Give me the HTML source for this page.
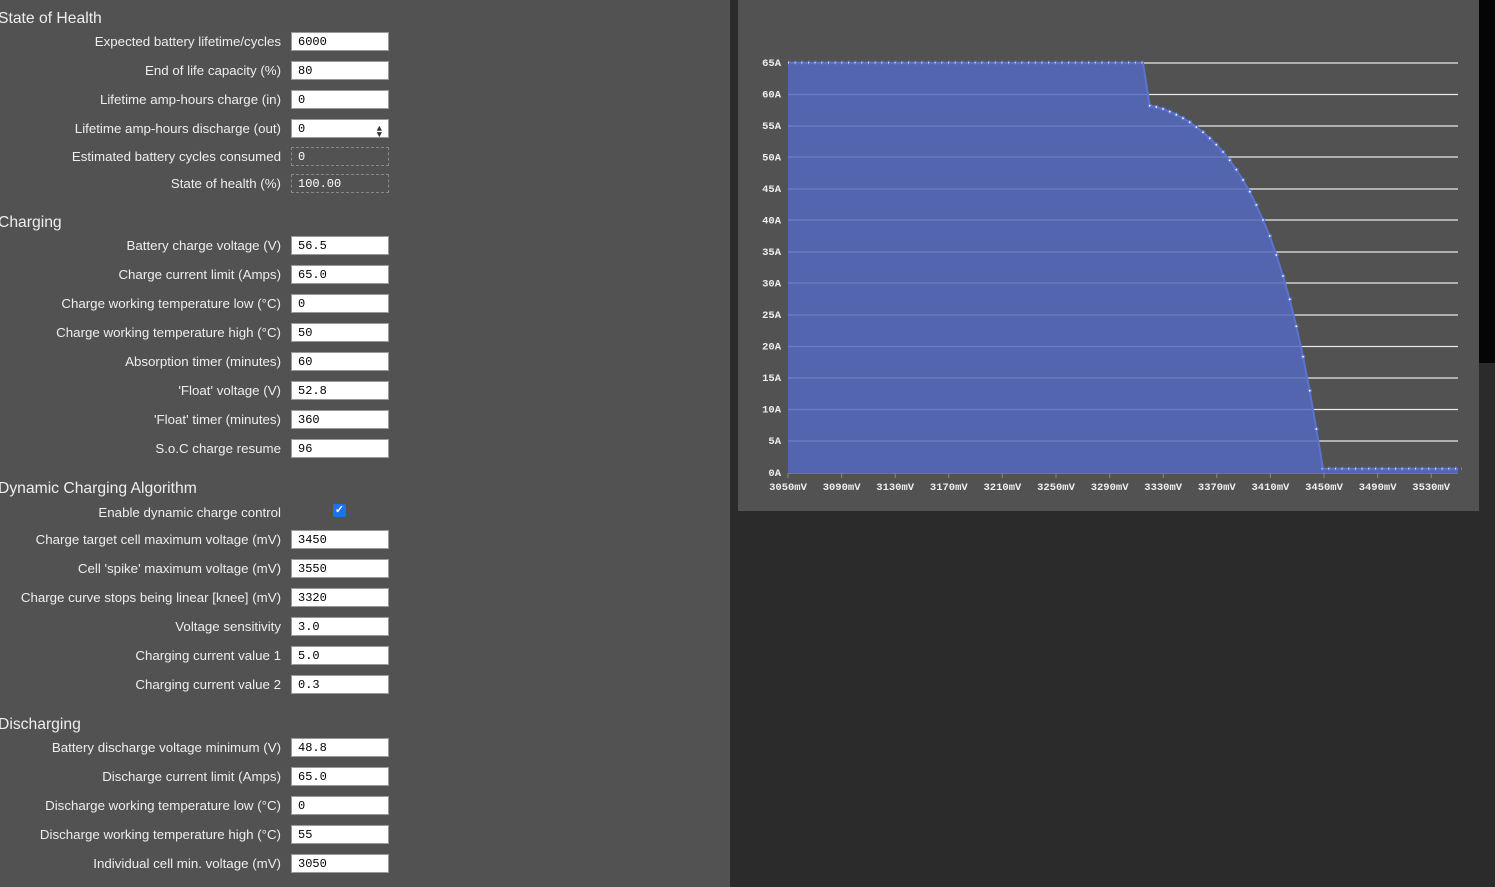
<!DOCTYPE html>
<html><head><meta charset="utf-8"><style>
*{margin:0;padding:0;box-sizing:border-box}
body{width:1495px;height:887px;overflow:hidden;background:#2b2b2b;position:relative;font-family:"Liberation Sans",Arial,sans-serif}
#left{position:absolute;left:0;top:0;width:730px;height:887px;background:#525252}
#blk{position:absolute;left:1479px;top:0;width:16px;height:363px;background:#050505}
#chart{position:absolute;left:738px;top:0;width:741px;height:511px;background:#525252}
.h{position:absolute;left:-2px;font-size:15.7px;color:#eee;white-space:nowrap}
.l{position:absolute;left:0;width:281px;text-align:right;font-size:13.3px;color:#eee;white-space:nowrap;line-height:19px}
.i{position:absolute;left:291px;width:98px;height:19px;background:#fff;border:1px solid #999;font-family:"Liberation Mono",monospace;font-size:12px;color:#000;padding-left:6px;line-height:18px}
.d{background:transparent;border:1px dashed #888;color:#fff}
.cb{position:absolute;left:333px;width:13px;height:13px;background:#1a73e8;border-radius:2px;color:#fff;font-size:11px;line-height:13px;text-align:center;font-weight:bold}
</style></head><body>
<div id="left">
<div class="h" style="top:10px">State of Health</div>
<div class="l" style="top:32px">Expected battery lifetime/cycles</div><div class="i" style="top:32px">6000</div>
<div class="l" style="top:61px">End of life capacity (%)</div><div class="i" style="top:61px">80</div>
<div class="l" style="top:90px">Lifetime amp-hours charge (in)</div><div class="i" style="top:90px">0</div>
<div class="l" style="top:119px">Lifetime amp-hours discharge (out)</div><div class="i" style="top:119px">0<span style="position:absolute;right:6px;top:0;font-size:9px;color:#333">&#9650;<br></span><span style="position:absolute;right:6px;top:6px;font-size:9px;color:#333">&#9660;</span></div>
<div class="l" style="top:147px">Estimated battery cycles consumed</div><div class="i d" style="top:147px">0</div>
<div class="l" style="top:174px">State of health (%)</div><div class="i d" style="top:174px">100.00</div>

<div class="h" style="top:214px">Charging</div>
<div class="l" style="top:236px">Battery charge voltage (V)</div><div class="i" style="top:236px">56.5</div>
<div class="l" style="top:265px">Charge current limit (Amps)</div><div class="i" style="top:265px">65.0</div>
<div class="l" style="top:294px">Charge working temperature low (°C)</div><div class="i" style="top:294px">0</div>
<div class="l" style="top:323px">Charge working temperature high (°C)</div><div class="i" style="top:323px">50</div>
<div class="l" style="top:352px">Absorption timer (minutes)</div><div class="i" style="top:352px">60</div>
<div class="l" style="top:381px">'Float' voltage (V)</div><div class="i" style="top:381px">52.8</div>
<div class="l" style="top:410px">'Float' timer (minutes)</div><div class="i" style="top:410px">360</div>
<div class="l" style="top:439px">S.o.C charge resume</div><div class="i" style="top:439px">96</div>

<div class="h" style="top:480px">Dynamic Charging Algorithm</div>
<div class="l" style="top:503px">Enable dynamic charge control</div><div class="cb" style="top:504px">✓</div>
<div class="l" style="top:530px">Charge target cell maximum voltage (mV)</div><div class="i" style="top:530px">3450</div>
<div class="l" style="top:559px">Cell 'spike' maximum voltage (mV)</div><div class="i" style="top:559px">3550</div>
<div class="l" style="top:588px">Charge curve stops being linear [knee] (mV)</div><div class="i" style="top:588px">3320</div>
<div class="l" style="top:617px">Voltage sensitivity</div><div class="i" style="top:617px">3.0</div>
<div class="l" style="top:646px">Charging current value 1</div><div class="i" style="top:646px">5.0</div>
<div class="l" style="top:675px">Charging current value 2</div><div class="i" style="top:675px">0.3</div>

<div class="h" style="top:716px">Discharging</div>
<div class="l" style="top:738px">Battery discharge voltage minimum (V)</div><div class="i" style="top:738px">48.8</div>
<div class="l" style="top:767px">Discharge current limit (Amps)</div><div class="i" style="top:767px">65.0</div>
<div class="l" style="top:796px">Discharge working temperature low (°C)</div><div class="i" style="top:796px">0</div>
<div class="l" style="top:825px">Discharge working temperature high (°C)</div><div class="i" style="top:825px">55</div>
<div class="l" style="top:854px">Individual cell min. voltage (mV)</div><div class="i" style="top:854px">3050</div>
</div>
<div id="blk"></div>
<div id="chart"></div>
<svg width="1495" height="887" style="position:absolute;left:0;top:0" xmlns="http://www.w3.org/2000/svg">
<defs>
<pattern id="dp" x="788" y="0" width="6.67" height="887" patternUnits="userSpaceOnUse">
<circle cx="0" cy="62.7" r="2.3" fill="#5b73d0"/><circle cx="0" cy="62.7" r="0.9" fill="#fff"/>
<circle cx="0" cy="468.7" r="2.3" fill="#5b73d0"/><circle cx="0" cy="468.7" r="0.9" fill="#fff"/>
</pattern>
</defs>
<g stroke="#e8e8e8" stroke-width="1.2">
<line x1="788" y1="63" x2="1458" y2="63"/><line x1="788" y1="94.5" x2="1458" y2="94.5"/><line x1="788" y1="126" x2="1458" y2="126"/><line x1="788" y1="157" x2="1458" y2="157"/><line x1="788" y1="189" x2="1458" y2="189"/><line x1="788" y1="220" x2="1458" y2="220"/><line x1="788" y1="252" x2="1458" y2="252"/><line x1="788" y1="283" x2="1458" y2="283"/><line x1="788" y1="315" x2="1458" y2="315"/><line x1="788" y1="346.5" x2="1458" y2="346.5"/><line x1="788" y1="378" x2="1458" y2="378"/><line x1="788" y1="409.5" x2="1458" y2="409.5"/><line x1="788" y1="441" x2="1458" y2="441"/>
</g>
<path d="M788,62.7 L1143,62.7 L1149.7,105.7 L1156.3,107 L1163,109 L1169.7,111.7 L1176.3,114.7 L1183,118.3 L1189.7,122.3 L1196.3,127 L1203,132.3 L1209.7,138.3 L1216.3,144.7 L1223,152 L1229.7,160.3 L1236.3,169.7 L1243,180 L1249.7,191.7 L1256.3,205 L1263,220 L1269.7,236 L1276.3,255 L1283,276 L1289.7,299.3 L1296.3,326.3 L1303,356.7 L1309.7,390.7 L1316.3,429 L1323,468.7 L1458,468.7 L1458,473 L788,473 Z" fill="rgba(84,104,190,0.85)" stroke="none"/>
<path d="M788,62.7 L1143,62.7 L1149.7,105.7 L1156.3,107 L1163,109 L1169.7,111.7 L1176.3,114.7 L1183,118.3 L1189.7,122.3 L1196.3,127 L1203,132.3 L1209.7,138.3 L1216.3,144.7 L1223,152 L1229.7,160.3 L1236.3,169.7 L1243,180 L1249.7,191.7 L1256.3,205 L1263,220 L1269.7,236 L1276.3,255 L1283,276 L1289.7,299.3 L1296.3,326.3 L1303,356.7 L1309.7,390.7 L1316.3,429 L1323,468.7 L1458,468.7" fill="none" stroke="#5b73d0" stroke-width="2"/>
<rect x="785" y="58" width="361" height="9" fill="url(#dp)"/>
<rect x="1320" y="464" width="142" height="9" fill="url(#dp)"/>
<g>
<g fill="#5b73d0"><circle cx="1149.7" cy="105.7" r="2.3"/><circle cx="1156.3" cy="107" r="2.3"/><circle cx="1163" cy="109" r="2.3"/><circle cx="1169.7" cy="111.7" r="2.3"/><circle cx="1176.3" cy="114.7" r="2.3"/><circle cx="1183" cy="118.3" r="2.3"/><circle cx="1189.7" cy="122.3" r="2.3"/><circle cx="1196.3" cy="127" r="2.3"/><circle cx="1203" cy="132.3" r="2.3"/><circle cx="1209.7" cy="138.3" r="2.3"/><circle cx="1216.3" cy="144.7" r="2.3"/><circle cx="1223" cy="152" r="2.3"/><circle cx="1229.7" cy="160.3" r="2.3"/><circle cx="1236.3" cy="169.7" r="2.3"/><circle cx="1243" cy="180" r="2.3"/><circle cx="1249.7" cy="191.7" r="2.3"/><circle cx="1256.3" cy="205" r="2.3"/><circle cx="1263" cy="220" r="2.3"/><circle cx="1269.7" cy="236" r="2.3"/><circle cx="1276.3" cy="255" r="2.3"/><circle cx="1283" cy="276" r="2.3"/><circle cx="1289.7" cy="299.3" r="2.3"/><circle cx="1296.3" cy="326.3" r="2.3"/><circle cx="1303" cy="356.7" r="2.3"/><circle cx="1309.7" cy="390.7" r="2.3"/><circle cx="1316.3" cy="429" r="2.3"/></g>
<g fill="#fff"><circle cx="1149.7" cy="105.7" r="0.9"/><circle cx="1156.3" cy="107" r="0.9"/><circle cx="1163" cy="109" r="0.9"/><circle cx="1169.7" cy="111.7" r="0.9"/><circle cx="1176.3" cy="114.7" r="0.9"/><circle cx="1183" cy="118.3" r="0.9"/><circle cx="1189.7" cy="122.3" r="0.9"/><circle cx="1196.3" cy="127" r="0.9"/><circle cx="1203" cy="132.3" r="0.9"/><circle cx="1209.7" cy="138.3" r="0.9"/><circle cx="1216.3" cy="144.7" r="0.9"/><circle cx="1223" cy="152" r="0.9"/><circle cx="1229.7" cy="160.3" r="0.9"/><circle cx="1236.3" cy="169.7" r="0.9"/><circle cx="1243" cy="180" r="0.9"/><circle cx="1249.7" cy="191.7" r="0.9"/><circle cx="1256.3" cy="205" r="0.9"/><circle cx="1263" cy="220" r="0.9"/><circle cx="1269.7" cy="236" r="0.9"/><circle cx="1276.3" cy="255" r="0.9"/><circle cx="1283" cy="276" r="0.9"/><circle cx="1289.7" cy="299.3" r="0.9"/><circle cx="1296.3" cy="326.3" r="0.9"/><circle cx="1303" cy="356.7" r="0.9"/><circle cx="1309.7" cy="390.7" r="0.9"/><circle cx="1316.3" cy="429" r="0.9"/></g>
</g>
<line x1="788" y1="473.5" x2="1458" y2="473.5" stroke="#777" stroke-width="1"/>
<g stroke="#888"><line x1="788" y1="473" x2="788" y2="478"/><line x1="841.6" y1="473" x2="841.6" y2="478"/><line x1="895.2" y1="473" x2="895.2" y2="478"/><line x1="948.8" y1="473" x2="948.8" y2="478"/><line x1="1002.4" y1="473" x2="1002.4" y2="478"/><line x1="1056" y1="473" x2="1056" y2="478"/><line x1="1109.6" y1="473" x2="1109.6" y2="478"/><line x1="1163.2" y1="473" x2="1163.2" y2="478"/><line x1="1216.8" y1="473" x2="1216.8" y2="478"/><line x1="1270.4" y1="473" x2="1270.4" y2="478"/><line x1="1324" y1="473" x2="1324" y2="478"/><line x1="1377.6" y1="473" x2="1377.6" y2="478"/><line x1="1431.2" y1="473" x2="1431.2" y2="478"/></g>
<g font-family="Liberation Mono, monospace" font-size="10.5" font-weight="bold" fill="#eee" text-anchor="end">
<text x="781" y="66">65A</text><text x="781" y="97.5">60A</text><text x="781" y="129">55A</text><text x="781" y="160.5">50A</text><text x="781" y="192">45A</text><text x="781" y="223.5">40A</text><text x="781" y="255">35A</text><text x="781" y="286.5">30A</text><text x="781" y="318">25A</text><text x="781" y="349.5">20A</text><text x="781" y="381">15A</text><text x="781" y="412.5">10A</text><text x="781" y="444">5A</text><text x="781" y="476">0A</text>
</g>
<g font-family="Liberation Mono, monospace" font-size="10.5" font-weight="bold" fill="#eee" text-anchor="middle">
<text x="788" y="490">3050mV</text><text x="841.6" y="490">3090mV</text><text x="895.2" y="490">3130mV</text><text x="948.8" y="490">3170mV</text><text x="1002.4" y="490">3210mV</text><text x="1056" y="490">3250mV</text><text x="1109.6" y="490">3290mV</text><text x="1163.2" y="490">3330mV</text><text x="1216.8" y="490">3370mV</text><text x="1270.4" y="490">3410mV</text><text x="1324" y="490">3450mV</text><text x="1377.6" y="490">3490mV</text><text x="1431.2" y="490">3530mV</text>
</g>
</svg>
</body></html>
